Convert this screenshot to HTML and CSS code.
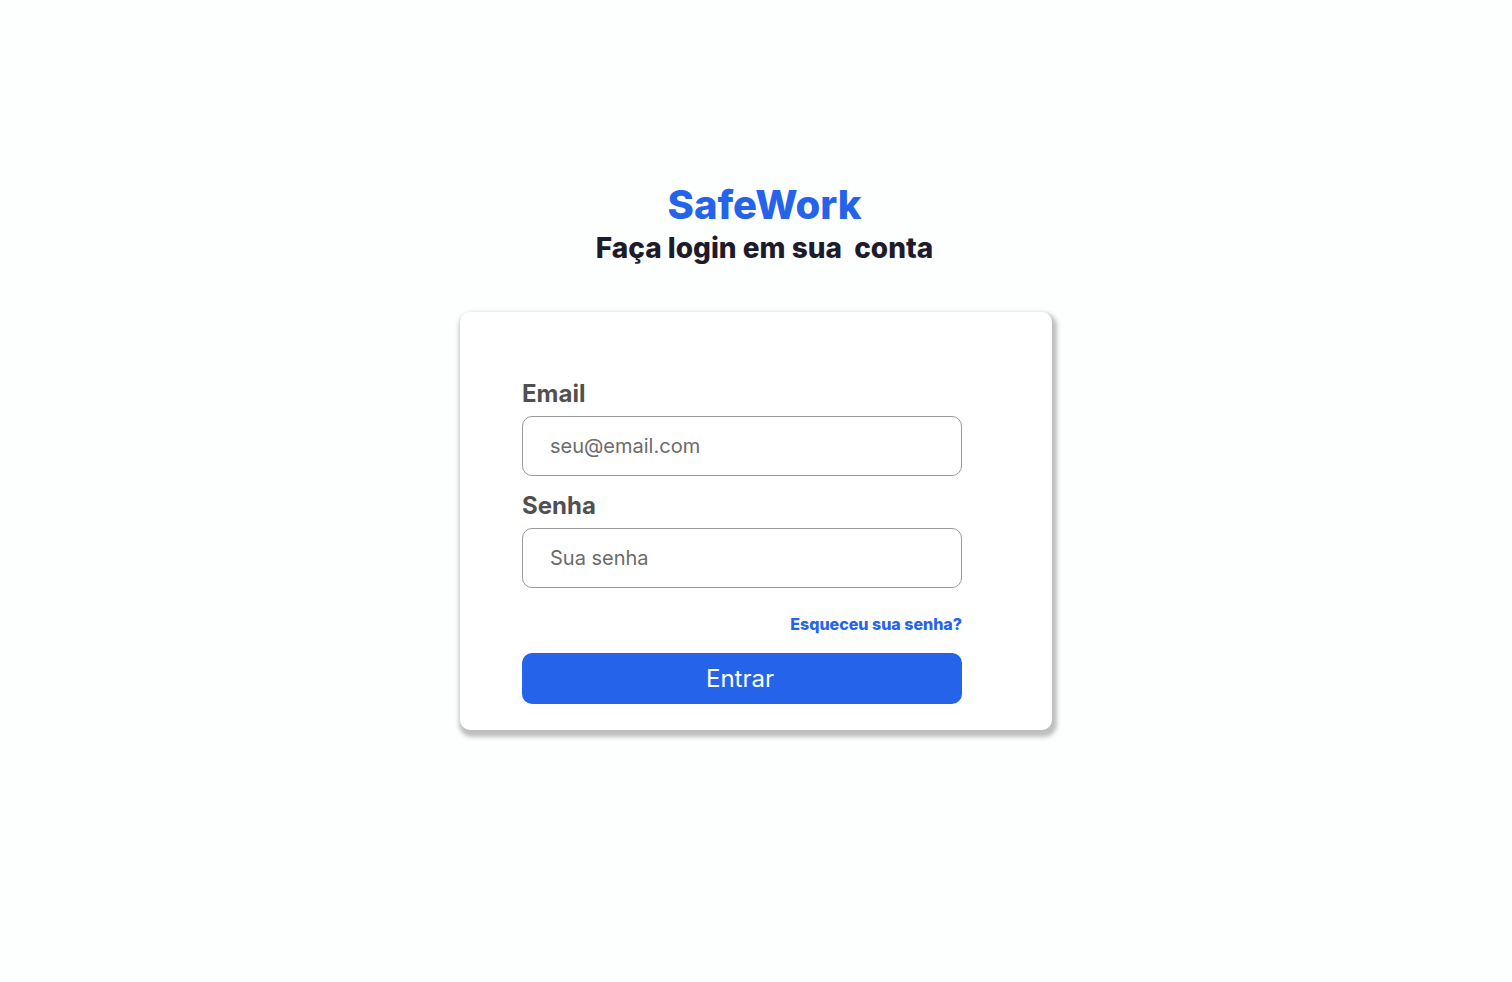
FILE: index.html
```html
<!DOCTYPE html>
<html lang="pt-BR">
<head>
<meta charset="utf-8">
<meta name="viewport" content="width=device-width, initial-scale=1">
<title>SafeWork</title>
<link rel="stylesheet" href="styles.css">
</head>
<body>
<main class="page">
  <header class="heading">
    <h1 class="brand">SafeWork</h1>
    <p class="subtitle">Faça login em sua&nbsp; conta</p>
  </header>
  <form class="card">
    <div class="field">
      <label class="label" for="email">Email</label>
      <input class="input" id="email" type="email" placeholder="seu@email.com">
    </div>
    <div class="field">
      <label class="label" for="senha">Senha</label>
      <input class="input" id="senha" type="password" placeholder="Sua senha">
    </div>
    <a class="forgot" href="#">Esqueceu sua senha?</a>
    <button class="submit" type="submit">Entrar</button>
  </form>
</main>
</body>
</html>
```
FILE: styles.css
```css
* {
  box-sizing: border-box;
}

body {
  margin: 0;
  background: #fdfefe;
  font-family: Inter, "Liberation Sans", sans-serif;
}

.page {
  display: flex;
  flex-direction: column;
  align-items: center;
  padding: 181px 16px 48px;
}

.heading {
  padding-left: 17px;
  text-align: center;
}

.brand {
  margin: 0;
  font-size: 40px;
  font-weight: 800;
  line-height: 48px;
  color: #2563eb;
}

.subtitle {
  margin: 0;
  font-size: 28px;
  font-weight: 800;
  line-height: 38px;
  color: #1e1b2c;
}

.card {
  display: flex;
  flex-direction: column;
  width: 100%;
  max-width: 592px;
  margin-top: 45px;
  padding: 66px 90px 26px 62px;
  border-radius: 10px;
  background: #fff;
  box-shadow: 2px 4px 4px 3px rgba(0, 0, 0, 0.25);
}

.field {
  display: flex;
  flex-direction: column;
  margin-bottom: 14px;
}

.label {
  padding-bottom: 6px;
  font-size: 24px;
  font-weight: 700;
  line-height: 32px;
  color: #505050;
}

.input {
  width: 100%;
  height: 60px;
  padding: 0 27px;
  border: 1px solid #999;
  border-radius: 10px;
  background: #fff;
  font: 400 20px/24px Inter, "Liberation Sans", sans-serif;
  color: #333;
}

.input::placeholder {
  color: #6b6b6b;
  opacity: 1;
}

.forgot {
  align-self: flex-end;
  margin: 10px 0 17px;
  font-size: 16px;
  font-weight: 800;
  line-height: 24px;
  color: #2563eb;
  text-decoration: none;
}

.submit {
  height: 51px;
  padding: 0 4px 0 0;
  border: 0;
  border-radius: 10px;
  background: #2563eb;
  font: 400 24px/32px Inter, "Liberation Sans", sans-serif;
  color: #fff;
}
```
